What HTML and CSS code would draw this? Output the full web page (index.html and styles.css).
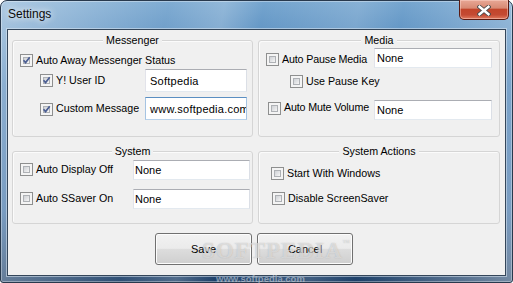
FILE: index.html
```html
<!DOCTYPE html>
<html>
<head>
<meta charset="utf-8">
<title>Settings</title>
<link rel="stylesheet" href="styles.css">
</head>
<body>
<div class="window">
  <div class="titlebar">
    <span class="title">Settings</span>
    <div class="close">
      <svg width="14" height="11" viewBox="0 0 14 11">
        <path d="M2.5 1.8 L11.5 9.2 M11.5 1.8 L2.5 9.2" stroke="#4a4a4a" stroke-width="4.2" stroke-linecap="square" fill="none"/>
        <path d="M2.5 1.8 L11.5 9.2 M11.5 1.8 L2.5 9.2" stroke="#ffffff" stroke-width="2.4" stroke-linecap="square" fill="none"/>
      </svg>
    </div>
  </div>
  <div class="client">
    <div class="groups">
      <section class="group">
        <div class="gtitle">Messenger</div>
        <div class="row ma">
          <span class="cb on"><i></i><svg viewBox="0 0 13 13"><path d="M3 6.2 L5.4 9 L10.3 2.6" stroke="#4b5e93" stroke-width="2" fill="none"/></svg></span>
          <span class="lbl">Auto Away Messenger Status</span>
        </div>
        <div class="row mb">
          <span class="cb on"><i></i><svg viewBox="0 0 13 13"><path d="M3 6.2 L5.4 9 L10.3 2.6" stroke="#4b5e93" stroke-width="2" fill="none"/></svg></span>
          <span class="lbl">Y! User ID</span>
          <span class="tb tb-m">Softpedia</span>
        </div>
        <div class="row mc">
          <span class="cb on"><i></i><svg viewBox="0 0 13 13"><path d="M3 6.2 L5.4 9 L10.3 2.6" stroke="#4b5e93" stroke-width="2" fill="none"/></svg></span>
          <span class="lbl">Custom Message</span>
          <span class="tb tb-m focus">www.softpedia.com</span>
        </div>
      </section>

      <section class="group">
        <div class="gtitle">Media</div>
        <div class="row da">
          <span class="cb"><i></i></span>
          <span class="lbl">Auto Pause Media</span>
          <span class="tb tb-d">None</span>
        </div>
        <div class="row db">
          <span class="cb"><i></i></span>
          <span class="lbl">Use Pause Key</span>
        </div>
        <div class="row dc">
          <span class="cb"><i></i></span>
          <span class="lbl">Auto Mute Volume</span>
          <span class="tb tb-d">None</span>
        </div>
      </section>

      <section class="group">
        <div class="gtitle">System</div>
        <div class="row sa">
          <span class="cb"><i></i></span>
          <span class="lbl">Auto Display Off</span>
          <span class="tb tb-s">None</span>
        </div>
        <div class="row sb">
          <span class="cb"><i></i></span>
          <span class="lbl">Auto SSaver On</span>
          <span class="tb tb-s">None</span>
        </div>
      </section>

      <section class="group">
        <div class="gtitle">System Actions</div>
        <div class="row xa">
          <span class="cb"><i></i></span>
          <span class="lbl">Start With Windows</span>
        </div>
        <div class="row xb">
          <span class="cb"><i></i></span>
          <span class="lbl">Disable ScreenSaver</span>
        </div>
      </section>
    </div>
    <div class="buttons">
      <div class="btn btn-save">Save</div>
      <div class="btn btn-cancel">Cancel</div>
    </div>
  </div>
  <div class="wm">SOFTPEDIA<sup>™</sup></div>
  <div class="wm-url">www.softpedia.com</div>
</div>
</body>
</html>
```

FILE: styles.css
```css
html, body {
  margin: 0;
  padding: 0;
  background: #ffffff;
}
body {
  width: 513px;
  height: 283px;
  overflow: hidden;
  font-family: "Liberation Sans", Arial, sans-serif;
  font-size: 10.7px;
  color: #000;
}
.window {
  position: relative;
  box-sizing: border-box;
  width: 513px;
  height: 283px;
  border: 1px solid #28394d;
  border-radius: 7px 7px 3px 3px;
  padding: 0 6px 6px 6px;
  background:
    linear-gradient(100deg, rgba(255,255,255,0.42) 0%, rgba(255,255,255,0.08) 30%, rgba(255,255,255,0.22) 40%, rgba(255,255,255,0) 47%, rgba(255,255,255,0.14) 64%, rgba(255,255,255,0) 72%, rgba(255,255,255,0.38) 100%),
    linear-gradient(#75a5cf 0%, #447db4 30%, #3469a1 75%, #1e4068 100%);
  box-shadow: inset 0 0 0 1px rgba(255,255,255,0.35);
}
.titlebar {
  display: flex;
  align-items: flex-start;
  height: 28px;
}
.title {
  margin: 6px 0 0 1px;
  font-size: 12px;
  line-height: 15px;
  color: #0b0b0b;
  text-shadow: 0 0 6px rgba(255,255,255,0.9), 0 0 10px rgba(255,255,255,0.6);
}
.close {
  margin: -1px -3px 0 auto;
  box-sizing: border-box;
  width: 50px;
  height: 20px;
  border: 1px solid #5a1a12;
  border-top: none;
  border-radius: 0 0 5px 5px;
  background: linear-gradient(#e8a896 0%, #d88a74 42%, #c2452b 50%, #c44a33 78%, #e07a5f 100%);
  box-shadow: inset 0 0 0 1px rgba(255,220,210,0.45);
  display: flex;
  align-items: center;
  justify-content: center;
}
.close svg { display: block; margin-top: 1px; }

.client {
  box-sizing: border-box;
  height: 247px;
  border: 1px solid #34465a;
  background: #f0f0f0;
  box-shadow: 0 0 0 1px rgba(220,232,242,0.55);
}
.groups {
  display: grid;
  grid-template-columns: 241px 242px;
  grid-template-rows: 97px 73px;
  column-gap: 5px;
  row-gap: 14px;
  padding: 10px 0 0 4px;
}
.group {
  box-sizing: border-box;
  border: 1px solid #d5d5d5;
  border-radius: 3px;
  box-shadow: inset 1px 1px 0 #fbfbfb;
}
.gtitle {
  display: table;
  margin: -7px auto -6px;
  padding: 0 3px;
  background: #f0f0f0;
  line-height: 13px;
}
.row {
  display: flex;
  align-items: flex-start;
}
.lbl {
  margin-left: 3px;
  line-height: 13px;
  white-space: nowrap;
}
.cb {
  display: grid;
  flex: none;
  box-sizing: border-box;
  width: 13px;
  height: 13px;
  border: 1px solid #8e8f8f;
  background: #f4f4f4;
  padding: 2px;
}
.cb i {
  grid-area: 1 / 1;
  box-sizing: border-box;
  border: 1px solid #aeb1b5;
  background: linear-gradient(135deg, #cfd2d6 0%, #e3e4e6 55%, #f7f7f7 100%);
}
.cb svg {
  grid-area: 1 / 1;
  margin: -2px;
  width: 11px;
  height: 11px;
}
.tb {
  flex: none;
  box-sizing: border-box;
  margin-left: auto;
  background: #fff;
  border: 1px solid;
  border-color: #abadb3 #dbdfe6 #e3e9ef #e2e3ea;
  white-space: nowrap;
  overflow: hidden;
  display: flex;
  align-items: center;
  font-size: 11px;
}
.tb.focus {
  border-color: #5b8fc2 #a6c4e2 #b7d1ea #a6c4e2;
}
.tb-m { width: 102px; height: 23px; padding-left: 4px; letter-spacing: 0.25px; }
.tb-d { width: 118px; height: 20px; padding-left: 2px; }
.tb-s { width: 117px; height: 20px; padding-left: 1px; }

/* Messenger */
.ma { margin-top: 11px; height: 17px; padding-left: 7px; align-items: center; }
.mb { height: 23px; padding: 0 5px 0 27px; align-items: center; }
.mc { margin-top: 5px; height: 23px; padding: 0 5px 0 27px; align-items: center; }
.mc .cb { margin-top: 1px; }

/* Media */
.da { margin-top: 7px; height: 20px; padding: 0 7px 0 7px; }
.da .cb, .da .lbl { margin-top: 5px; }
.db { margin-top: 7px; height: 13px; padding-left: 31px; }
.dc { margin-top: 12px; height: 20px; padding: 0 7px 0 9px; }
.dc .cb { margin-top: 2px; }
.dc .lbl { margin-top: 1px; }
.da .lbl, .dc .lbl { letter-spacing: -0.15px; }

/* System */
.sa { margin-top: 8px; height: 20px; padding: 0 2px 0 7px; }
.sb { margin-top: 9px; height: 20px; padding: 0 2px 0 7px; }
.sa .cb, .sb .cb, .sa .lbl, .sb .lbl { margin-top: 3px; }

/* System Actions */
.xa { margin-top: 15px; height: 13px; padding-left: 12px; }
.xb { margin-top: 12px; height: 13px; padding-left: 13px; }

.buttons {
  display: flex;
  gap: 5px;
  margin-top: 9px;
  padding-left: 147px;
}
.btn {
  box-sizing: border-box;
  height: 32px;
  border: 1px solid #707070;
  border-radius: 3px;
  background: linear-gradient(#f2f2f2 0%, #ebebeb 48%, #dddddd 50%, #cfcfcf 100%);
  box-shadow: inset 0 0 0 1px #fcfcfc;
  display: flex;
  align-items: center;
  justify-content: center;
  line-height: 13px;
  font-size: 11px;
}
.btn-save { width: 97px; }
.btn-cancel { width: 96px; }

.wm {
  position: absolute;
  left: 201px;
  top: 237px;
  font-family: "Liberation Serif", "Times New Roman", serif;
  font-size: 23px;
  font-weight: bold;
  letter-spacing: 1px;
  line-height: 26px;
  color: rgba(255,255,255,0.5);
  text-shadow: 0 0 1px rgba(120,120,120,0.5);
  pointer-events: none;
}
.wm sup {
  font-size: 7px;
  vertical-align: top;
  line-height: 10px;
}
.wm-url {
  position: absolute;
  left: 215px;
  top: 273px;
  font-size: 9.5px;
  font-weight: bold;
  line-height: 10px;
  color: rgba(200,210,220,0.6);
  pointer-events: none;
}
```
